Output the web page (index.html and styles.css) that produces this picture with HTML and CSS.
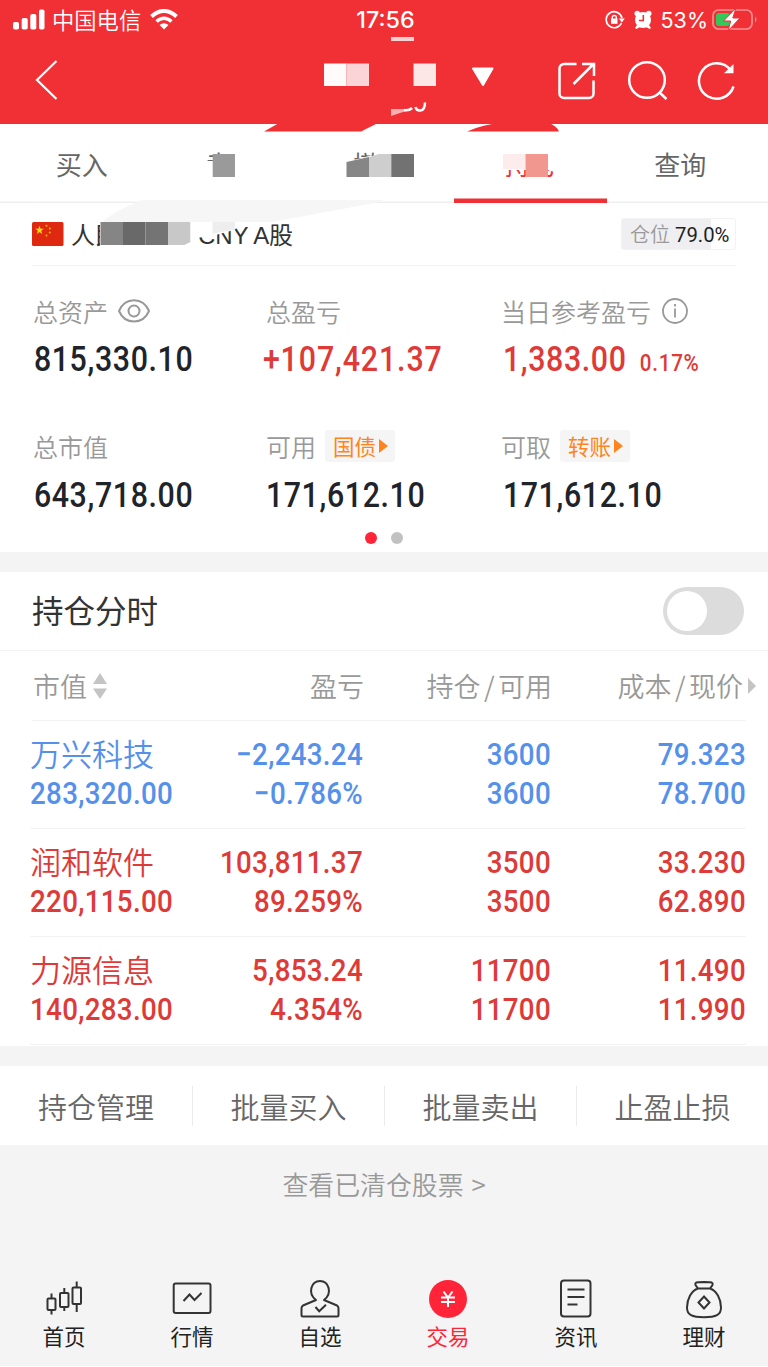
FILE: index.html
```html
<!DOCTYPE html>
<html lang="zh-CN">
<head>
<meta charset="utf-8">
<title>持仓</title>
<link rel="stylesheet" href="styles.css">
</head>
<body>
<div class="app">
  <header class="top">
    <div class="status">
      <div class="carrier">
        <svg width="32" height="22" viewBox="0 0 32 22" fill="#fff"><rect x="0" y="13" width="6" height="7.500" rx="1.800"/><rect x="8.700" y="9" width="6" height="11.500" rx="1.800"/><rect x="17.300" y="5" width="6" height="15.500" rx="1.800"/><rect x="26" y="0.500" width="5.500" height="20" rx="1.800"/></svg>
        <span class="carrier-name">中国电信</span>
        <svg width="28" height="21" viewBox="0 0 28 21" fill="none" stroke="#fff" stroke-width="4"><path d="M1.500 7.500Q14-3.500 26.500 7.500"/><path d="M6.500 12.500Q14 6 21.500 12.500" stroke-width="3.500"/><path d="M9.500 16Q14 12.500 18.500 16L14 20.500Z" fill="#fff" stroke="none"/></svg>
      </div>
      <div class="clock">17:56</div>
      <div class="battery">
        <svg width="20" height="20" viewBox="0 0 20 20" fill="none" stroke="#fff" stroke-width="1.700"><path d="M16.500 13A8 8 0 1 1 17 8"/><path d="M13.800 8.500h6l-3 4z" fill="#fff" stroke="none"/><rect x="6" y="8.500" width="6.500" height="5.300" fill="#fff" stroke="none"/><path d="M7.300 9V7.500a2 2 0 0 1 4 0V9" stroke-width="1.300"/></svg>
        <svg width="18" height="20" viewBox="0 0 18 20"><g fill="#fff"><circle cx="9" cy="10" r="8"/><circle cx="3.200" cy="3.400" r="2.700"/><circle cx="14.800" cy="3.400" r="2.700"/><path d="M3 15l-2 3 1.500 1L6 17zM15 15l2 3-1.500 1L12 17z"/></g><path d="M9.300 5v5.500H5" fill="none" stroke="#f13036" stroke-width="1.600"/></svg>
        <span class="pct">53%</span>
        <svg width="46" height="24" viewBox="0 0 46 24"><rect x="1" y="2" width="39" height="19" rx="5.500" fill="none" stroke="#f88f93" stroke-width="1.700"/><rect x="4" y="5" width="14" height="13" rx="3" fill="#35c759"/><path d="M43 8.500q3 3 0 6z" fill="#f88f93"/><path d="M24 0L11.500 13h7.200L16 23 28 10h-7.200z" fill="#fff" stroke="#f13036" stroke-width="1"/></svg>
      </div>
    </div>
    <div class="nav">
      <svg class="back" width="24" height="42" viewBox="0 0 24 42" fill="none" stroke="#fff" stroke-width="2.200"><path d="M21.500 2L2 21l19.500 19"/></svg>
      <svg class="caret" width="24" height="20" viewBox="0 0 24 20"><path d="M2 1.500h19.500L12 18z" fill="#fff" stroke="#fff" stroke-width="2" stroke-linejoin="round"/></svg>
      <div class="tools">
        <svg width="38" height="38" viewBox="0 0 38 38" fill="none" stroke="#fff" stroke-width="2.500"><path d="M18.500 2H6a4.500 4.500 0 0 0-4.500 4.500v25A4.500 4.500 0 0 0 6 36h25a4.500 4.500 0 0 0 4.500-4.500V18.500M15.500 22L34.500 3M24 2h12v12"/></svg>
        <svg width="42" height="42" viewBox="0 0 42 42" fill="none" stroke="#fff" stroke-width="2.500"><circle cx="21" cy="20" r="17.800"/><path d="M33 32l7.500 7"/></svg>
        <svg width="40" height="42" viewBox="0 0 40 42" fill="none" stroke="#fff" stroke-width="2.500"><path d="M36.500 26.500A17.700 17.700 0 1 1 33.500 10"/><path d="M36.500 4v9.300H27z" fill="#fff" stroke="none"/></svg>
      </div>
    </div>
  </header>

  <nav class="tabs">
    <span class="tab">买入</span><span class="tab partial">卖</span><span class="tab partial">撤</span><span class="tab active">持仓</span><span class="tab">查询</span>
  </nav>

  <section class="account">
    <div class="account-row">
      <svg width="32" height="24" viewBox="0 0 32 24"><rect width="31.500" height="24" rx="1.500" fill="#de2910"/><path d="M7.500 3.800l1.100 3h3.200L9.200 8.700l1 3.200-2.700-1.900-2.700 1.900 1-3.200-2.600-1.900h3.200z" fill="#ffde00"/><g fill="#f5b400"><circle cx="14.500" cy="3.800" r="1"/><circle cx="17.800" cy="6.500" r="1"/><circle cx="17.800" cy="10.500" r="1"/><circle cx="14.500" cy="13.500" r="1"/></g></svg>
      <span class="account-name">人民</span><span class="account-type">CNY A股</span>
      <span class="position"><span class="position-label">仓位</span>79.0%</span>
    </div>
    <div class="stats">
      <div class="stat"><div class="label">总资产<svg class="eye" width="32" height="26" viewBox="0 0 32 26" fill="none" stroke="#999" stroke-width="2"><path d="M1 13C7-1.500 25-1.500 31 13C25 27 7 27 1 13Z"/><circle cx="16" cy="13" r="5.500"/></svg></div><div class="num">815,330.10</div></div>
      <div class="stat"><div class="label">总盈亏</div><div class="num red plus">+107,421.37</div></div>
      <div class="stat"><div class="label">当日参考盈亏<svg class="info" width="28" height="28" viewBox="0 0 28 28" fill="none" stroke="#999" stroke-width="1.800"><circle cx="14" cy="14" r="12"/><path d="M14 11.500v9M14 7v2.500"/></svg></div><div class="num red">1,383.00<small>0.17%</small></div></div>
      <div class="stat"><div class="label">总市值</div><div class="num">643,718.00</div></div>
      <div class="stat"><div class="label">可用<span class="chip">国债<i></i></span></div><div class="num">171,612.10</div></div>
      <div class="stat"><div class="label">可取<span class="chip">转账<i></i></span></div><div class="num">171,612.10</div></div>
    </div>
    <div class="dots"><i class="dot on"></i><i class="dot"></i></div>
  </section>

  <section class="holdings">
    <div class="title-row"><h2>持仓分时</h2><span class="switch"></span></div>
    <div class="grid head"><span class="sort-cell">市值<svg width="14" height="26" viewBox="0 0 14 26" fill="#c4c4c4"><path d="M7 0l7 11H0zM0 15.500h14L7 26z"/></svg></span><span>盈亏</span><span>持仓<b>/</b>可用</span><span>成本<b>/</b>现价</span><i class="more"></i></div>
    <div class="grid row blue"><span class="name">万兴科技</span><span>−2,243.24</span><span>3600</span><span>79.323</span><span>283,320.00</span><span>−0.786%</span><span>3600</span><span>78.700</span></div>
    <div class="grid row red"><span class="name">润和软件</span><span>103,811.37</span><span>3500</span><span>33.230</span><span>220,115.00</span><span>89.259%</span><span>3500</span><span>62.890</span></div>
    <div class="grid row red"><span class="name">力源信息</span><span>5,853.24</span><span>11700</span><span>11.490</span><span>140,283.00</span><span>4.354%</span><span>11700</span><span>11.990</span></div>
  </section>

  <section class="actions"><span>持仓管理</span><span>批量买入</span><span>批量卖出</span><span>止盈止损</span></section>
  <div class="cleared">查看已清仓股票 &gt;</div>

  <footer class="bottom">
    <div class="item"><svg width="40" height="40" viewBox="0 0 40 40" fill="none" stroke="#333" stroke-width="2"><rect x="3.500" y="19.500" width="8" height="11.500" rx="1"/><path d="M7.500 14.500v5M7.500 31v4.500"/><rect x="16" y="14" width="8.500" height="14" rx="1"/><path d="M20.300 9v5M20.300 28v4"/><rect x="28.500" y="8.500" width="8.500" height="16.500" rx="1"/><path d="M32.700 2.500v6M32.700 25v8"/></svg><span>首页</span></div>
    <div class="item"><svg width="40" height="40" viewBox="0 0 40 40" fill="none" stroke="#333" stroke-width="2"><rect x="1.700" y="4.500" width="36.800" height="29.500" rx="2"/><path d="M11.500 22l6-6.500 5 5.500 7-7"/></svg><span>行情</span></div>
    <div class="item"><svg width="40" height="40" viewBox="0 0 40 40" fill="none" stroke="#333" stroke-width="2"><path d="M16 21L3 26.500q-1.500 1-1.500 3V36q0 1.500 1.500 1.500h34q1.500 0 1.500-1.500v-6.500q0-2-1.500-3L24 21C33 14 28.500 2 20 2S7 14 16 21Z" stroke-linejoin="round"/><path d="M15.500 28l3.700 4.200 6.800-6.500"/></svg><span>自选</span></div>
    <div class="item current"><svg width="40" height="40" viewBox="0 0 40 40"><circle cx="20" cy="20" r="19" fill="#ff2438"/><path d="M15.500 12.500l4.500 6 4.500-6M13 18.500h14M13 23h14M20 18v10" fill="none" stroke="#fff" stroke-width="2"/></svg><span>交易</span></div>
    <div class="item"><svg width="40" height="40" viewBox="0 0 40 40" fill="none" stroke="#333" stroke-width="2"><rect x="5" y="1.500" width="29.500" height="36" rx="3"/><path d="M11.500 10.500h17M11.500 18h17M11.500 25.500h10"/></svg><span>资讯</span></div>
    <div class="item"><svg width="40" height="40" viewBox="0 0 40 40" fill="none" stroke="#333" stroke-width="2"><path d="M14 9.500L11.500 6Q10.500 3.500 14 3.300L20 3l6 .3q3.500.2 2.500 2.700L26 9.500ZM14 9.500C7.500 11.500 3 20 3 28.500 3 36 8 38.300 20 38.300S37 36 37 28.500C37 20 32.500 11.500 26 9.500"/><path d="M20 17.500l5.500 6-5.500 6-5.500-6z"/></svg><span>理财</span></div>
  </footer>

  <svg class="redaction" width="768" height="260" viewBox="0 0 768 260">
    <path d="M264 131.500L279 123H378L361 131.500ZM467 131.500Q484 124 500 123H548Q556 125 559 131.500Z" fill="#f13036"/>
    <rect x="391" y="37" width="23" height="4" fill="#fbd0d3"/>
    <rect x="324" y="63.500" width="22.500" height="22.500" fill="#fffbfb"/><rect x="346.500" y="63.500" width="22.500" height="22.500" fill="#fbd4d8"/>
    <rect x="413.500" y="63.500" width="22.500" height="22.500" fill="#fde6e6"/>
    <path d="M391 109h22l-10 3-12 4z" fill="#f9b0b2"/><path d="M404 110q5 1 8-2M415.500 107q1 4 5 3.500 4.500-.500 4.500-8" fill="none" stroke="#fff" stroke-width="2.500"/>
    <rect x="204" y="161" width="10" height="18" fill="#fff"/><rect x="223" y="148" width="15" height="30" fill="#fff"/><rect x="212.700" y="154" width="22.300" height="23" fill="#9a9a9a"/>
    <path d="M346 162l23-6h10v22h-33z" fill="#fff"/><path d="M346.500 162l22.500-5v20h-22.500z" fill="#868686"/><path d="M369 157l10-3h12.500v23H369z" fill="#cecece"/><rect x="391.300" y="154" width="22.700" height="23" fill="#727272"/>
    <rect x="502" y="147" width="58" height="23" fill="#fff"/><rect x="503" y="154" width="22.500" height="15" fill="#fdecec"/><rect x="525.500" y="154" width="22.500" height="23" fill="#f29690"/>
    <path d="M142 200H384L375 203Q320 213 272 222L190 222H102Q116 210 142 200Z" fill="#f6f6f6"/>
    <path d="M100 222h90v26h-90z" fill="#fff"/><path d="M190 222h56l-12 8-22 6-16 2-6 3z" fill="#fff"/><path d="M212.500 222H235v8q-12 1-22.500 4z" fill="#eee"/>
    <path d="M100.500 222H123v23h-22.500z" fill="#858585"/><path d="M123 222h22.500v23H123z" fill="#696969"/><path d="M145.500 222H168v23h-22.500z" fill="#747474"/><path d="M168 222h22.300v20l-6 3H168z" fill="#c8c8c8"/>
  </svg>
</div>
</body>
</html>
```
FILE: styles.css
```css
* { box-sizing: border-box; }
body { margin: 0; background: #fff; font-family: "Noto Sans CJK SC", sans-serif; }
svg { display: block; flex: none; }
.app { position: relative; width: 768px; height: 1366px; background: #f4f4f4; overflow: hidden; display: flex; flex-direction: column; }
.top { height: 124px; background: #f13036; color: #fff; flex: none; }
.status { height: 38px; display: grid; grid-template-columns: 1fr 100px 1fr; align-items: center; padding: 0 10px 0 13px; }
.carrier, .battery { display: flex; align-items: center; }
.carrier-name { font-size: 22.300px; font-weight: 350; line-height: 36px; margin: 0 9px 2px 7px; }
.clock { font: 500 23.300px/38px Inter, sans-serif; text-align: center; padding-top: 1px; }
.battery { justify-content: flex-end; gap: 9px; padding-top: 1px; }
.pct { font: 400 21.500px/36px Inter, sans-serif; margin-right: -5px; }
.nav { height: 86px; display: flex; align-items: center; padding: 0 31px 2px 35px; }
.caret { margin: -7px 0 0 412px; }
.tools { display: flex; align-items: center; gap: 29.500px; margin-left: auto; padding-top: 1px; }
.tabs { height: 79px; flex: none; background: #fff; box-shadow: inset 0 -1.500px #efefef; display: grid; grid-template-columns: repeat(5, 149.600px); padding-left: 7px; font-size: 26px; line-height: 79px; text-align: center; color: #666; }
.tab.partial { text-align: left; padding-left: 49px; }
.tab.partial + .partial { padding-left: 47px; }
.tab.active { color: #f13036; margin: 0 -2px; box-shadow: inset 0 -4.500px #f13036; }
.account { height: 349px; background: #fff; padding: 0 32px; flex: none; }
.account-row { height: 63px; display: flex; align-items: center; border-bottom: 1.500px solid #f3f3f3; font-size: 24px; line-height: 34px; color: #333; }
.account-name { margin-left: 7px; width: 127px; }
.account-type { font: 24px/32px "Liberation Sans", "Noto Sans CJK SC", sans-serif; letter-spacing: -.100px; padding-top: 3px; }
.position { margin-left: auto; width: 115px; height: 32px; font: 20.300px/31px Roboto, sans-serif; color: #222; border: 1px solid #f2f2f4; border-radius: 3px; background: linear-gradient(90deg, #efeff2 78.500%, #fff 78.500%); padding-left: 8px; white-space: nowrap; }
.position-label { font: 350 20px/30px "Noto Sans CJK SC", sans-serif; color: #999; margin-right: 5px; }
.stats { display: grid; grid-template-columns: 233px 235px 1fr; grid-template-rows: 135px 104px; padding-top: 24px; }
.stat { padding-left: 1px; }
.label { height: 42px; display: flex; align-items: center; font-size: 25px; font-weight: 350; color: #999; }
.eye { margin-left: 10px; }
.info { margin-left: 10px; }
.num { font: 500 34.500px/54px Roboto, sans-serif; letter-spacing: .700px; color: #20242a; padding-left: 1px; white-space: nowrap; transform: scaleX(.88); transform-origin: left; }
.stat:nth-child(n+4) .num { line-height: 56px; }
.num.plus { margin-left: -4px; letter-spacing: 1px; }
.num.red { color: #de3a38; }
.num small { font-size: 23.500px; letter-spacing: .800px; margin-left: 15px; }
.stat:nth-child(5) .num { margin-left: -1px; }
.stat:nth-child(3n) .num { margin-left: 1px; }
.chip { height: 32px; display: flex; align-items: center; padding: 0 7px 0 8px; margin-left: 9px; background: #f5f5f5; border-radius: 3px; font-size: 21.500px; line-height: 30px; font-weight: 400; color: #ff8420; }
.chip i { border-left: 9px solid #ff8420; border-top: 7px solid transparent; border-bottom: 7px solid transparent; margin-left: 3px; }
.dots { display: flex; justify-content: center; gap: 14px; margin-top: 3px; }
.dot { width: 12px; height: 12px; border-radius: 6px; background: #c1c1c1; }
.dot.on { background: #ff2438; }
.holdings { margin-top: 20px; height: 474px; background: #fff; flex: none; }
.title-row { height: 79px; display: flex; align-items: center; justify-content: space-between; padding: 0 24px 0 32px; border-bottom: 1.500px solid #f3f3f3; }
h2 { margin: 0; font-size: 31.500px; font-weight: 400; line-height: 72px; padding-bottom: 4px; color: #333; }
.switch { width: 81px; height: 48px; border-radius: 24px; background: #dcdcdc; padding: 4px; }
.switch::before { content: ""; display: block; width: 40px; height: 40px; border-radius: 20px; background: #fff; }
.grid { position: relative; display: grid; grid-template-columns: 150px 183px 188px 195px; margin: 0 22px 0 30px; }
.grid > span { text-align: right; white-space: nowrap; }
.head { height: 70px; line-height: 70px; font-size: 27px; font-weight: 350; color: #999; }
.head::after { content: ""; position: absolute; left: 2px; right: 0; bottom: 0; height: 1.500px; background: #f3f3f3; }
.head b { font-weight: 350; margin: 0 3.500px; }
.grid > .sort-cell { display: flex; align-items: center; gap: 6px; padding-left: 3px; }
.head > span:nth-child(2), .head > span:nth-child(3) { margin-right: -1px; }
.head > span:nth-child(4) { margin-right: 3px; }
.more { position: absolute; right: -10px; top: 27px; border-left: 8px solid #c4c4c4; border-top: 8px solid transparent; border-bottom: 8px solid transparent; }
.row { height: 108px; padding-top: 14px; grid-template-rows: 39px 39px; border-bottom: 1.500px solid #f3f3f3; font: 500 31.500px/40px Roboto, sans-serif; letter-spacing: .350px; }
.grid.row > span { transform: scaleX(.88); transform-origin: right; }
.grid.row > span:nth-child(4n+1) { text-align: left; transform-origin: left; }
.grid.row > .name { font: 350 31px/36px "Noto Sans CJK SC", sans-serif; letter-spacing: 0; transform: none; }
.blue { color: #5590ea; }
.red { color: #de3a38; }
.actions { margin-top: 20px; height: 79px; background: #fff; display: grid; grid-template-columns: repeat(4, 1fr); align-items: center; text-align: center; font-size: 29px; line-height: 40px; font-weight: 350; color: #666; flex: none; }
.actions span + span { border-left: 1.500px solid #ececec; }
.cleared { height: 80px; line-height: 78px; text-align: center; font-size: 25.900px; word-spacing: 2px; font-weight: 350; color: #999; flex: none; }
.bottom { margin-top: auto; height: 90px; display: grid; grid-template-columns: repeat(6, 128px); flex: none; }
.item { display: flex; flex-direction: column; align-items: center; font-size: 21.500px; line-height: 33px; color: #222; padding-top: 3px; }
.current { color: #ff2438; }
.redaction { position: absolute; left: 0; top: 0; pointer-events: none; }
```
